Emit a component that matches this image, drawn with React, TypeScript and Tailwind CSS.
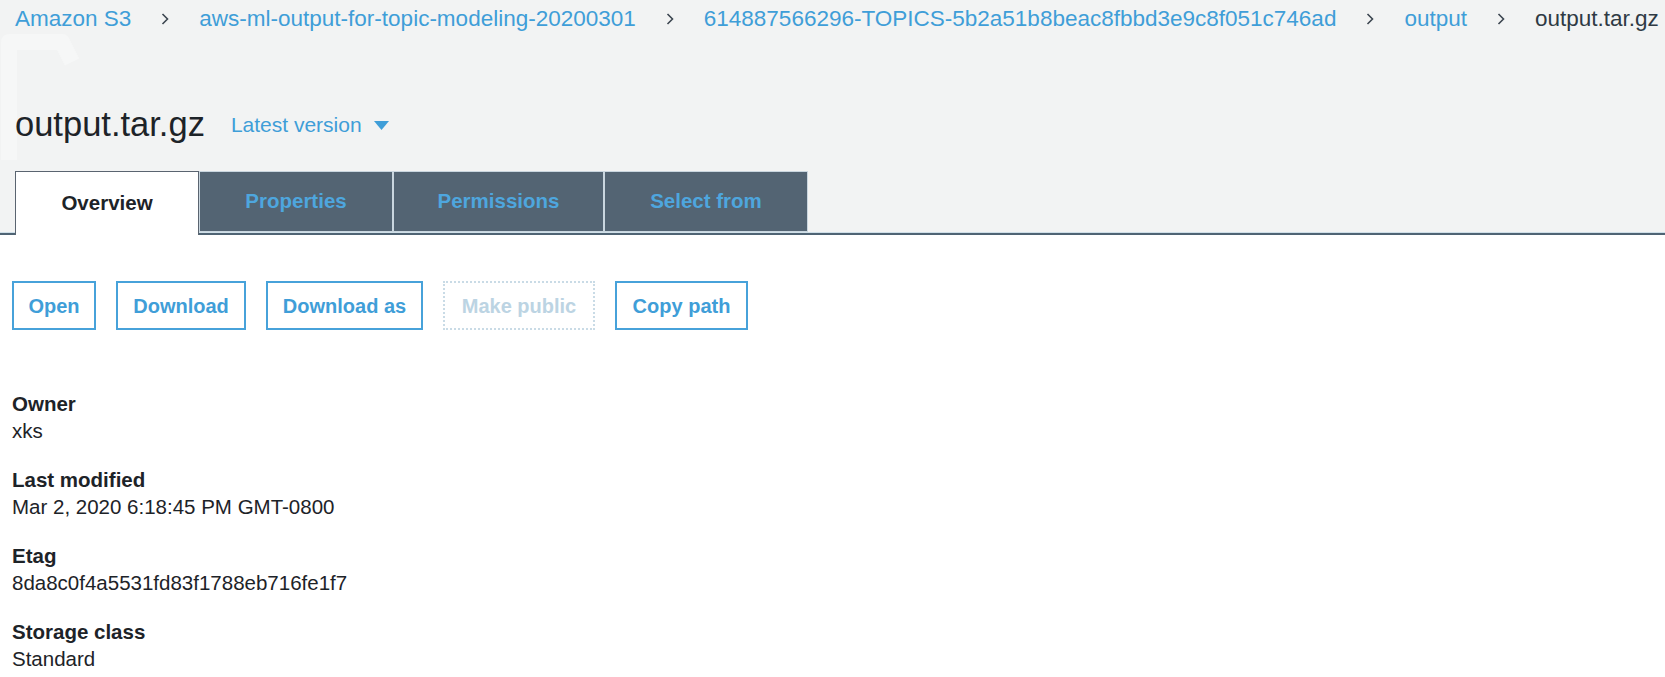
import React from "react";

const crumbs = [
  { label: "Amazon S3", link: true },
  { label: "aws-ml-output-for-topic-modeling-20200301", link: true },
  { label: "614887566296-TOPICS-5b2a51b8beac8fbbd3e9c8f051c746ad", link: true },
  { label: "output", link: true },
  { label: "output.tar.gz", link: false },
];

const tabs = [
  { label: "Overview", width: "w-[184px]", active: true },
  { label: "Properties", width: "w-[194px]", active: false },
  { label: "Permissions", width: "w-[211px]", active: false },
  { label: "Select from", width: "w-[204px]", active: false },
];

const actions = [
  { label: "Open", width: "w-[84px]", disabled: false },
  { label: "Download", width: "w-[130px]", disabled: false },
  { label: "Download as", width: "w-[157px]", disabled: false },
  { label: "Make public", width: "w-[152px]", disabled: true },
  { label: "Copy path", width: "w-[133px]", disabled: false },
];

const details = [
  { label: "Owner", value: "xks" },
  { label: "Last modified", value: "Mar 2, 2020 6:18:45 PM GMT-0800" },
  { label: "Etag", value: "8da8c0f4a5531fd83f1788eb716fe1f7" },
  { label: "Storage class", value: "Standard" },
];

const Chevron = () => (
  <svg width="10" height="14" viewBox="0 0 10 14" className="shrink-0">
    <path d="M2.5 2 L7.5 7 L2.5 12" fill="none" stroke="#3c4650" strokeWidth="1.6" />
  </svg>
);

export default function App() {
  return (
    <div className="min-h-screen bg-white font-['Liberation_Sans',Arial,sans-serif] text-[#1d2328]">
      {/* Header area */}
      <div className="relative bg-[#f2f3f3]">
        {/* faint watermark */}
        <svg
          className="absolute left-0 top-0 pointer-events-none"
          width="90"
          height="160"
          viewBox="0 0 90 160"
        >
          <path
            d="M9 160 L9 42 L62 42 L72 62"
            fill="none"
            stroke="#f6f7f7"
            strokeWidth="16"
            strokeLinejoin="round"
          />
        </svg>

        {/* Breadcrumb */}
        <div className="relative flex h-[38px] items-center gap-[29px] whitespace-nowrap pl-[15px] text-[22.5px] leading-none">
          {crumbs.map((c, i) => (
            <React.Fragment key={c.label}>
              {i > 0 && <Chevron />}
              <span className={`shrink-0 ${c.link ? "text-[#3f9ed8]" : "text-[#2f3a44]"}`}>{c.label}</span>
            </React.Fragment>
          ))}
        </div>

        {/* Title */}
        <div className="relative flex h-[133px] items-start pl-[15px] pt-[67px]">
          <h1 className="text-[34.5px] leading-[38px] text-[#1d2328]">output.tar.gz</h1>
          <button className="ml-[26px] mt-[7px] flex items-center text-[21px] leading-[26px] text-[#3f9ed8]">
            Latest version
            <svg width="15" height="9" viewBox="0 0 15 9" className="ml-[12px]">
              <path d="M0 0 H15 L7.5 9 Z" fill="#3f9ed8" />
            </svg>
          </button>
        </div>

        {/* Tabs */}
        <div className="relative flex pl-[15px]">
          {tabs.map((t) =>
            t.active ? (
              <div
                key={t.label}
                className={`${t.width} z-10 -mb-[3px] flex h-[64px] items-center justify-center border border-b-0 border-[#5a6470] bg-white text-[20.5px] font-bold text-[#1d2328]`}
              >
                {t.label}
              </div>
            ) : (
              <div
                key={t.label}
                className={`${t.width} flex h-[61px] items-center justify-center border border-[#c9d6df] bg-[#536473] text-[20.5px] font-bold text-[#4ea6de]`}
              >
                {t.label}
              </div>
            )
          )}
        </div>
        <div className="h-px bg-[#cfdfe8]" />
        <div className="h-[2px] bg-[#4f6474]" />
      </div>

      {/* Content */}
      <div className="px-[12px]">
        <div className="mt-[46px] flex gap-[20px]">
          {actions.map((a) => (
            <button
              key={a.label}
              className={`${a.width} flex h-[49px] items-center justify-center border-2 text-[20px] font-bold ${
                a.disabled
                  ? "border-dotted border-[#c9dbe6] text-[#bcd4e3]"
                  : "border-[#47a2da] text-[#3f9ed8]"
              }`}
            >
              {a.label}
            </button>
          ))}
        </div>

        <div className="mt-[61px] flex flex-col gap-[23px]">
          {details.map((d) => (
            <div key={d.label} className="text-[20.5px] leading-[26.5px]">
              <div className="font-bold">{d.label}</div>
              <div>{d.value}</div>
            </div>
          ))}
        </div>
      </div>
    </div>
  );
}
